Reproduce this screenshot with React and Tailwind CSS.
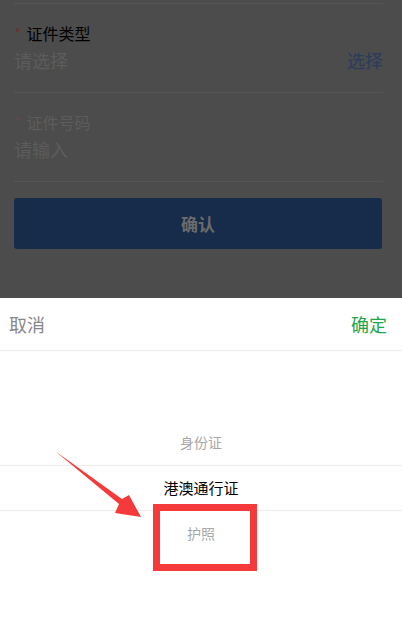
import React from "react";

const font = { fontFamily: '"Noto Sans CJK SC", "Noto Sans", sans-serif' };

const Field = ({ label, placeholder, action, dim }) => (
  <div className="flex h-[89px] flex-col border-b border-[#555555] pt-[18px]">
    <div className={`flex items-center text-[16px] leading-[22px] ${dim ? "text-[#5c5c5c]" : "text-black"}`}>
      <span className={`ml-[1px] mr-[6px] text-[12px] ${dim ? "text-[#6a4a4a]" : "text-[#7a2626]"}`}>*</span>
      {label}
    </div>
    <div className="mt-[3px] flex items-center justify-between text-[18px] leading-[26px]">
      <span className="text-[#5c5c5c]">{placeholder}</span>
      {action && <span className="text-[#2a3b5c]">{action}</span>}
    </div>
  </div>
);

const App = () => {
  return (
    <div className="relative h-[618px] w-[402px] overflow-hidden bg-white" style={font}>
      <div className="h-[298px] bg-[#4c4c4c] pl-[14px] pr-[19px] pt-[3px]">
        <div className="border-t border-[#555555]">
          <Field label="证件类型" placeholder="请选择" action="选择" />
          <Field label="证件号码" placeholder="请输入" dim />
        </div>
        <div className="mt-[16px] flex h-[51px] w-[368px] items-center justify-center rounded-[3px] bg-[#172b4b] text-[17px] font-bold text-[#6b6b6b]">
          确认
        </div>
      </div>

      <div className="flex h-[53px] items-center justify-between border-b border-[#ececec] px-[9px] text-[18px]">
        <span className="text-[#888888]">取消</span>
        <span className="pr-[6px] text-[#20a64a]">确定</span>
      </div>

      <div className="flex flex-col pt-[69px]">
        <div className="flex h-[45px] items-center justify-center text-[14px] text-[#a8a8a8]">身份证</div>
        <div className="flex h-[46px] items-center justify-center border-y border-[#ececec] text-[15px] text-black">
          港澳通行证
        </div>
        <div className="flex h-[45px] items-center justify-center text-[14px] text-[#a8a8a8]">护照</div>
      </div>

      <div className="absolute left-[153px] top-[504px] h-[67px] w-[104px] border-[7px] border-[#f43a3a]" />

      <svg className="absolute left-0 top-0" width="402" height="618" viewBox="0 0 402 618">
        <polygon
          points="55,451 122,499 129,495 141,517 115,513 119,504"
          fill="#f43a3a"
        />
      </svg>
    </div>
  );
};

export default App;
